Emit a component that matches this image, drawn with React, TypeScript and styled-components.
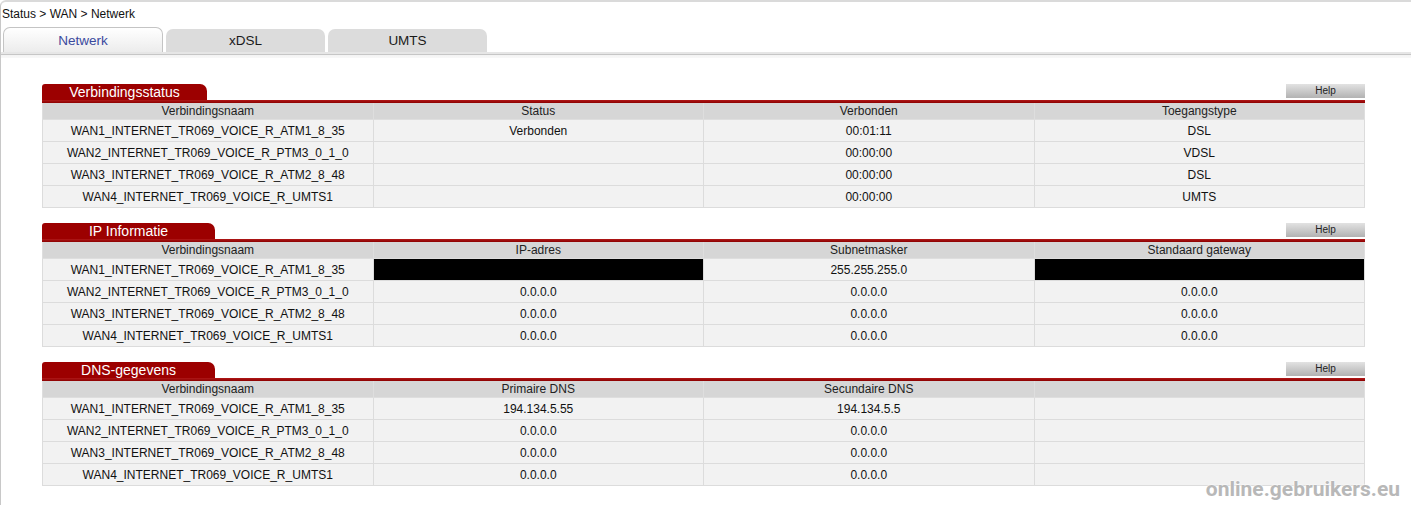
import React from "react";
import styled, { createGlobalStyle } from "styled-components";

const Global = createGlobalStyle`
  html, body { margin: 0; padding: 0; background: #fff; }
  body { font-family: "Liberation Sans", Arial, sans-serif; font-size: 12px; color: #111; }
`;

const Frame = styled.div`
  position: relative;
  min-height: 505px;
  box-sizing: border-box;
  border-top: 2px solid #dadada;
  border-left: 1px solid #c8c8c8;
  border-top-left-radius: 6px;
`;

const Breadcrumb = styled.div`
  padding: 5px 0 0 1px;
  height: 15px;
  line-height: 15px;
  font-size: 12px;
  color: #111;
`;

const TabBar = styled.div`
  display: flex;
  gap: 3px;
  padding-left: 2px;
  margin-top: 5px;
  align-items: flex-end;
  height: 25px;
`;

const Tab = styled.div<{ $active?: boolean }>`
  box-sizing: border-box;
  width: ${(p) => (p.$active ? 160 : 159)}px;
  height: ${(p) => (p.$active ? 25 : 23)}px;
  border-radius: 7px 7px 0 0;
  display: flex;
  align-items: center;
  justify-content: center;
  font-size: 13.5px;
  color: ${(p) => (p.$active ? "#3b4a9e" : "#1a1a1a")};
  background: ${(p) =>
    p.$active ? "linear-gradient(#ffffff, #ececec)" : "#dcdcdc"};
  border: ${(p) => (p.$active ? "1px solid #c4c4c4" : "none")};
  border-bottom: none;
  padding-top: ${(p) => (p.$active ? 1 : 0)}px;
`;

const TabRule = styled.div`
  height: 6px;
  background: linear-gradient(
    #e6e6e6 0px,
    #e6e6e6 2px,
    #c6c6c6 2px,
    #c6c6c6 3px,
    #f3f3f3 3px,
    #f8f8f8 6px
  );
`;

const Content = styled.div`
  padding: 26px 46px 0 41px;
  display: flex;
  flex-direction: column;
  gap: 15px;
`;

const Section = styled.section`
  display: flex;
  flex-direction: column;
`;

const SectionHead = styled.div`
  display: flex;
  justify-content: space-between;
  align-items: flex-start;
  height: 16px;
`;

const SectionTab = styled.div<{ $w: number }>`
  width: ${(p) => p.$w}px;
  height: 16px;
  background: #9c0000;
  border-radius: 3px 7px 0 0;
  color: #fff;
  font-size: 14px;
  line-height: 16px;
  text-align: center;
`;

const HelpButton = styled.button`
  width: 79px;
  height: 14px;
  margin: 0;
  padding: 0;
  border: none;
  background: linear-gradient(#e2e2e2, #b2b2b2);
  font-family: "Liberation Sans", Arial, sans-serif;
  font-size: 10px;
  color: #222;
  line-height: 14px;
`;

const RedRule = styled.div`
  height: 3px;
  background: linear-gradient(#b01818, #8c0000);
`;

const Table = styled.table`
  width: 100%;
  border-collapse: collapse;
  table-layout: fixed;
  font-size: 12px;
`;

const HeadCell = styled.th`
  height: 16px;
  padding: 0;
  background: #d6d6d6;
  border: 1px solid #dedede;
  border-top: none;
  font-weight: normal;
  color: #222;
  text-align: center;
  line-height: 14px;
`;

const Cell = styled.td<{ $black?: boolean }>`
  height: 21px;
  padding: 0;
  background: ${(p) => (p.$black ? "#000" : "#f2f2f2")};
  border: 1px solid #dcdcdc;
  text-align: center;
  color: #111;
`;

const Watermark = styled.div`
  position: absolute;
  right: 11px;
  bottom: 4px;
  font-family: Roboto, "Liberation Sans", sans-serif;
  font-weight: 700;
  font-size: 21px;
  letter-spacing: 0px;
  color: #b8b8b8;
  text-shadow: 0 0 2px #fff, 0 0 2px #fff;
`;

type Row = string[];

const names = [
  "WAN1_INTERNET_TR069_VOICE_R_ATM1_8_35",
  "WAN2_INTERNET_TR069_VOICE_R_PTM3_0_1_0",
  "WAN3_INTERNET_TR069_VOICE_R_ATM2_8_48",
  "WAN4_INTERNET_TR069_VOICE_R_UMTS1",
];

const sections: {
  title: string;
  w: number;
  head: string[];
  rows: Row[];
  black?: [number, number][];
}[] = [
  {
    title: "Verbindingsstatus",
    w: 165,
    head: ["Verbindingsnaam", "Status", "Verbonden", "Toegangstype"],
    rows: [
      [names[0], "Verbonden", "00:01:11", "DSL"],
      [names[1], "", "00:00:00", "VDSL"],
      [names[2], "", "00:00:00", "DSL"],
      [names[3], "", "00:00:00", "UMTS"],
    ],
  },
  {
    title: "IP Informatie",
    w: 173,
    head: ["Verbindingsnaam", "IP-adres", "Subnetmasker", "Standaard gateway"],
    rows: [
      [names[0], "", "255.255.255.0", ""],
      [names[1], "0.0.0.0", "0.0.0.0", "0.0.0.0"],
      [names[2], "0.0.0.0", "0.0.0.0", "0.0.0.0"],
      [names[3], "0.0.0.0", "0.0.0.0", "0.0.0.0"],
    ],
    black: [
      [0, 1],
      [0, 3],
    ],
  },
  {
    title: "DNS-gegevens",
    w: 173,
    head: ["Verbindingsnaam", "Primaire DNS", "Secundaire DNS", ""],
    rows: [
      [names[0], "194.134.5.55", "194.134.5.5", ""],
      [names[1], "0.0.0.0", "0.0.0.0", ""],
      [names[2], "0.0.0.0", "0.0.0.0", ""],
      [names[3], "0.0.0.0", "0.0.0.0", ""],
    ],
  },
];

export default function App() {
  return (
    <>
      <Global />
      <Frame>
        <Breadcrumb>Status &gt; WAN &gt; Netwerk</Breadcrumb>
        <TabBar>
          <Tab $active>Netwerk</Tab>
          <Tab>xDSL</Tab>
          <Tab>UMTS</Tab>
        </TabBar>
        <TabRule />
        <Content>
          {sections.map((s) => (
            <Section key={s.title}>
              <SectionHead>
                <SectionTab $w={s.w}>{s.title}</SectionTab>
                <HelpButton>Help</HelpButton>
              </SectionHead>
              <RedRule />
              <Table>
                <thead>
                  <tr>
                    {s.head.map((h, i) => (
                      <HeadCell key={i}>{h}</HeadCell>
                    ))}
                  </tr>
                </thead>
                <tbody>
                  {s.rows.map((r, ri) => (
                    <tr key={ri}>
                      {r.map((c, ci) => (
                        <Cell
                          key={ci}
                          $black={!!s.black?.some(([a, b]) => a === ri && b === ci)}
                        >
                          {c}
                        </Cell>
                      ))}
                    </tr>
                  ))}
                </tbody>
              </Table>
            </Section>
          ))}
        </Content>
        <Watermark>online.gebruikers.eu</Watermark>
      </Frame>
    </>
  );
}
